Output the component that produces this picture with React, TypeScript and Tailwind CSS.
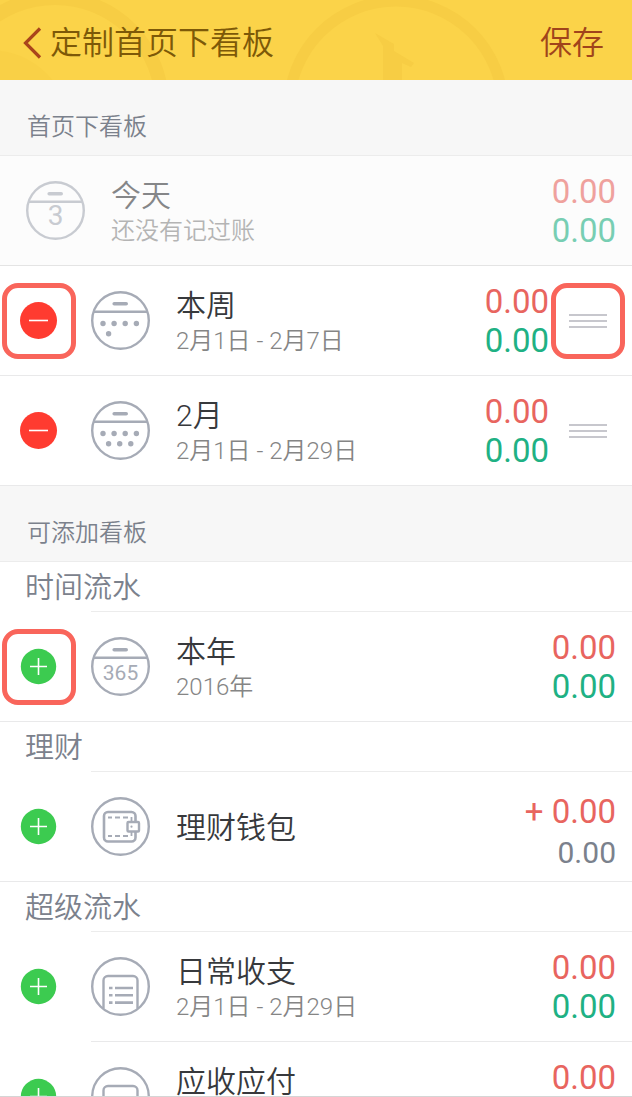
import React from "react";

type BoardKind = "day" | "week" | "month" | "year" | "wallet" | "list" | "card";

type Board = {
  kind: BoardKind;
  title: string;
  note?: string;
  first: string;
  second: string;
  action?: "remove" | "add";
  highlight?: boolean;
  balance?: boolean;
};

const shown: Board[] = [
  { kind: "day", title: "今天", note: "还没有记过账", first: "0.00", second: "0.00" },
  { kind: "week", title: "本周", note: "2月1日 - 2月7日", first: "0.00", second: "0.00", action: "remove", highlight: true },
  { kind: "month", title: "2月", note: "2月1日 - 2月29日", first: "0.00", second: "0.00", action: "remove" },
];

const groups: { name: string; boards: Board[] }[] = [
  {
    name: "时间流水",
    boards: [{ kind: "year", title: "本年", note: "2016年", first: "0.00", second: "0.00", action: "add", highlight: true }],
  },
  {
    name: "理财",
    boards: [{ kind: "wallet", title: "理财钱包", first: "+ 0.00", second: "0.00", action: "add", balance: true }],
  },
  {
    name: "超级流水",
    boards: [
      { kind: "list", title: "日常收支", note: "2月1日 - 2月29日", first: "0.00", second: "0.00", action: "add" },
      { kind: "card", title: "应收应付", note: "2月1日 - 2月29日", first: "0.00", second: "0.00", action: "add" },
    ],
  },
];

function Dots({ points }: { points: [number, number][] }) {
  return (
    <>
      {points.map(([x, y]) => (
        <circle key={`${x}-${y}`} cx={x} cy={y} r="2.7" fill="#a6abb6" stroke="none" />
      ))}
    </>
  );
}

const topDots: [number, number][] = [[12, 32.5], [23.1, 32.5], [34.2, 32.5], [45.4, 32.5]];

function BoardIcon({ kind }: { kind: BoardKind }) {
  const calendar = kind === "day" || kind === "week" || kind === "month" || kind === "year";
  return (
    <svg viewBox="0 0 60 60" className="size-[60px] shrink-0" fill="none" stroke="#a6abb6" strokeWidth="2.4" aria-hidden="true">
      <circle cx="29.5" cy="29.5" r="28.3" />
      {calendar && (
        <>
          <path d="M3 20.800h53" />
          <path d="M23.200 12.800h12" strokeWidth="3.600" strokeLinecap="round" />
        </>
      )}
      {kind === "week" && <Dots points={[...topDots, [17.6, 42.7]]} />}
      {kind === "month" && <Dots points={[...topDots, [17.6, 42.7], [28.7, 42.7], [39.8, 42.7]]} />}
      {kind === "day" && (
        <text x="29.5" y="43.5" textAnchor="middle" fontSize="28" fontWeight="400" fill="#a6abb6" stroke="none">3</text>
      )}
      {kind === "year" && (
        <text x="29.5" y="43" textAnchor="middle" fontSize="21" fontWeight="400" fill="#a6abb6" stroke="none">365</text>
      )}
      {kind === "wallet" && (
        <>
          <path d="M44.500 24.500v-5.500a4 4 0 0 0-4-4H17a4 4 0 0 0-4 4v21.500a4 4 0 0 0 4 4h23.500a4 4 0 0 0 4-4V35" strokeWidth="2.600" />
          <path d="M17 20.500h4M24 20.500h5M32 20.500h5M17 39h4M24 39h5M32 39h5" strokeWidth="1.800" />
          <path d="M40.500 20v4.500M40.500 35v4" strokeWidth="1.800" />
          <rect x="36.500" y="25" width="11.500" height="9.500" rx="1" strokeWidth="2.400" />
          <circle cx="40.500" cy="29.700" r="1.100" fill="#a6abb6" stroke="none" />
        </>
      )}
      {kind === "list" && (
        <>
          <path d="M12.500 51.500V23.500a4.500 4.500 0 0 1 4.500-4.500h25a4.500 4.500 0 0 1 4.500 4.500v28" />
          <path d="M18 31h3.500M18 38.300h3.500M18 45.600h3.500M24 31h18M24 38.300h18M24 45.600h18" strokeWidth="2.600" />
        </>
      )}
      {kind === "card" && (
        <path d="M12.500 51.500V23.500a4.500 4.500 0 0 1 4.500-4.500h25a4.500 4.500 0 0 1 4.500 4.500v28" />
      )}
    </svg>
  );
}

function Highlight() {
  return <span className="pointer-events-none absolute inset-0 rounded-2xl border-5 border-[#f9655b]" />;
}

function ActionButton({ board }: { board: Board }) {
  const remove = board.action === "remove";
  return (
    <button
      type="button"
      aria-label={`${remove ? "移除" : "添加"}${board.title}`}
      className="relative ml-0.5 flex h-[76px] w-[74px] shrink-0 items-center justify-center"
    >
      <svg viewBox="0 0 38 38" className="size-[38px]" stroke="#fff" strokeWidth="1.6" aria-hidden="true">
        <circle cx="18.5" cy="18.5" r={remove ? 18.5 : 17.7} fill={remove ? "#ff3b30" : "#3ccb50"} stroke="none" />
        <path d={remove ? "M9 18.5h19" : "M10 18.5h17M18.5 10v17"} />
      </svg>
      {board.highlight && <Highlight />}
    </button>
  );
}

function DragHandle({ board }: { board: Board }) {
  return (
    <button
      type="button"
      aria-label={`拖动${board.title}`}
      className="relative mr-[7px] ml-0.5 flex h-[76px] w-[74px] shrink-0 items-center justify-center"
    >
      <span className="flex w-[38px] flex-col gap-1" aria-hidden="true">
        <span className="h-0.5 bg-[#c7c7cd]" />
        <span className="h-0.5 bg-[#c7c7cd]" />
        <span className="h-0.5 bg-[#c7c7cd]" />
      </span>
      {board.highlight && <Highlight />}
    </button>
  );
}

function BoardRow({ board, inset = false }: { board: Board; inset?: boolean }) {
  const fixed = !board.action;
  const draggable = board.action === "remove";
  return (
    <li className={fixed ? "border-b border-[#e4e4e4] bg-[#fcfcfc]" : "bg-white"}>
      <div className={fixed ? "flex h-[109px] items-center pl-[26px] opacity-60" : "flex h-[110px] items-stretch"}>
        {board.action && (
          <div className={inset ? "flex w-[91px] shrink-0 items-center" : "flex w-[91px] shrink-0 items-center border-b border-[#e9e9ea]"}>
            <ActionButton board={board} />
          </div>
        )}
        <div className={fixed ? "flex min-w-0 flex-1 items-center" : "flex min-w-0 flex-1 items-center border-b border-[#e9e9ea]"}>
          <BoardIcon kind={board.kind} />
          <div className="ml-[25px] min-w-0 flex-1 pt-0.5">
            <h3 className="text-[30px] leading-[38px] text-[#37393c]">{board.title}</h3>
            {board.note && <p className="text-2xl leading-8 text-[#858585]">{board.note}</p>}
          </div>
          <div className={draggable ? "text-right font-normal" : "pr-4 text-right font-normal"}>
            <p className={board.balance ? "pt-3 text-[33px] leading-[39px] text-[#e8655f]" : "text-[33px] leading-[39px] text-[#e8655f]"}>
              {board.first}
            </p>
            <p className={board.balance ? "text-[30px] leading-[43px] text-[#7b818c]" : "text-[33px] leading-[39px] text-[#1fb184]"}>
              {board.second}
            </p>
          </div>
          {draggable && <DragHandle board={board} />}
        </div>
      </div>
    </li>
  );
}

function SectionTitle({ children }: { children: React.ReactNode }) {
  return (
    <h2 className="flex h-[76px] items-end border-b border-[#ececec] bg-[#f7f7f7] px-[27px] pb-2.5 text-2xl leading-9 text-[#7b818c]">
      {children}
    </h2>
  );
}

export default function App() {
  return (
    <div className="flex h-screen flex-col overflow-hidden border-b border-[#d5d5d5] bg-white font-[Roboto,'Noto_Sans_CJK_SC',sans-serif] font-[350]">
      <header className="relative flex h-20 shrink-0 items-center justify-between overflow-hidden bg-[#fbd349] pt-1.5 pr-7 pl-[22px]">
        <svg className="pointer-events-none absolute inset-0 h-full w-full" fill="none" stroke="#f7cd44" aria-hidden="true">
          <circle cx="55" cy="105" r="107" strokeWidth="14" />
          <circle cx="-10" cy="130" r="80" fill="#f9d046" stroke="none" />
          <circle cx="396" cy="108" r="107" strokeWidth="11" />
          <path d="M375 33l19 11v7l20 12-3 4-9-4v20h-19V46z" fill="#f7cd44" stroke="none" />
        </svg>
        <button type="button" className="relative flex items-center gap-2 text-[32px] leading-10 text-[#7d5908]">
          <svg viewBox="0 0 20 32" className="h-8 w-5" fill="none" stroke="#a9441c" strokeWidth="3.2" aria-hidden="true">
            <path d="M18 1.500L3.500 16L18 30.500" />
          </svg>
          <h1>定制首页下看板</h1>
        </button>
        <button type="button" className="relative text-[32px] leading-10 text-[#a0441b]">保存</button>
      </header>
      <main className="min-h-0 flex-1 overflow-y-auto [scrollbar-width:none]">
        <section>
          <SectionTitle>首页下看板</SectionTitle>
          <ul>
            {shown.map((board) => (
              <BoardRow key={board.title} board={board} />
            ))}
          </ul>
        </section>
        <section>
          <SectionTitle>可添加看板</SectionTitle>
          {groups.map((group) => (
            <section key={group.name}>
              <div className="flex h-[50px] text-[#7b818c]">
                <h3 className="w-[91px] shrink-0 pl-[25px] text-[29px] leading-[53px] whitespace-nowrap">{group.name}</h3>
                <div className="flex-1 border-b border-[#ececec]" />
              </div>
              <ul>
                {group.boards.map((board, i) => (
                  <BoardRow key={board.title} board={board} inset={i < group.boards.length - 1} />
                ))}
              </ul>
            </section>
          ))}
        </section>
      </main>
    </div>
  );
}
